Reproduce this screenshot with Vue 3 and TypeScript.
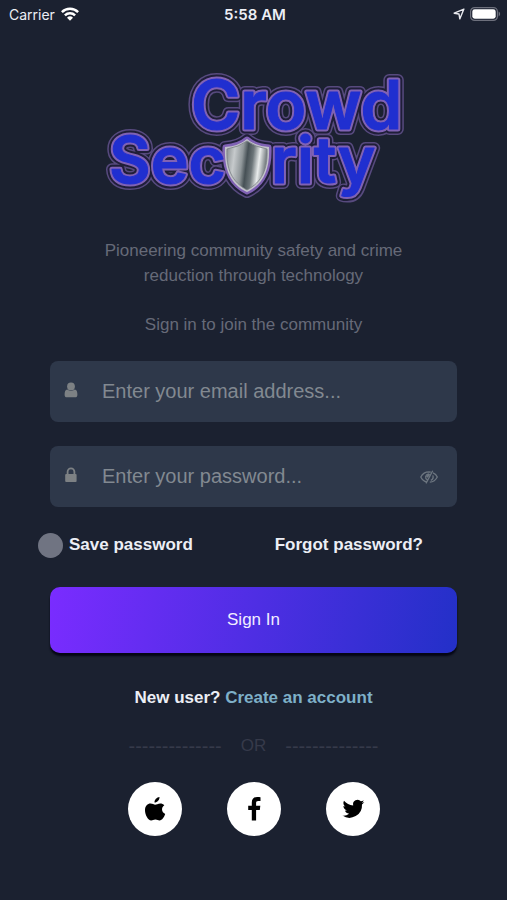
<script setup lang="ts">
import { ref } from 'vue'

const email = ref('')
const password = ref('')
const savePassword = ref(false)
const showPassword = ref(false)

const outlines: string[] = ['halo', 'gap', 'rim']
</script>

<template>
  <div class="screen">
    <header class="status">
      <div class="carrier">
        <span>Carrier</span>
        <svg width="18" height="14" viewBox="0 0 18 14" aria-hidden="true">
          <g fill="none" stroke="#fff" stroke-width="2.5">
            <path d="M.9 5.1a11.6 11.6 0 0 1 16.2 0" />
            <path d="M3.9 8.4a7.3 7.3 0 0 1 10.2 0" />
          </g>
          <path d="M9 13.8 6 10.7a4.3 4.3 0 0 1 6 0z" fill="#fff" />
        </svg>
      </div>
      <strong class="clock">5:58 AM</strong>
      <div class="power">
        <svg width="12" height="12" viewBox="0 0 12 12" aria-hidden="true">
          <path d="M10.9 1.1 1.2 5.2 6 6l.8 4.9z" fill="none" stroke="#e8e9ee" stroke-width="1.4" stroke-linejoin="round" />
        </svg>
        <svg width="31" height="14" viewBox="0 0 31 14" aria-hidden="true">
          <rect x=".6" y=".6" width="26.8" height="12.8" rx="4" fill="none" stroke="#6d707c" stroke-width="1.2" />
          <rect x="2.3" y="2.3" width="23.4" height="9.4" rx="2.4" fill="#fff" />
          <path d="M28.6 4.6c2 .7 2 4.1 0 4.8z" fill="#6d707c" />
        </svg>
      </div>
    </header>

    <main class="content">
      <svg class="logo" viewBox="0 -20 302 156" role="img" aria-label="Crowd Security">
        <defs>
          <linearGradient id="steel" x1="0" y1="0" x2="1" y2=".15">
            <stop offset="0" stop-color="#858b8e" />
            <stop offset=".22" stop-color="#c6cacc" />
            <stop offset=".42" stop-color="#90979a" />
            <stop offset=".54" stop-color="#465055" />
            <stop offset=".68" stop-color="#6c7579" />
            <stop offset=".84" stop-color="#e9ecec" />
            <stop offset="1" stop-color="#7d8487" />
          </linearGradient>
        </defs>
        <g v-for="outline in outlines" :key="outline" :class="outline">
          <use href="#wordmark" />
          <path d="M144 67q-8 7-22 8c-1 22 5 37 22 45 17-8 23-23 22-45q-14-1-22-8z" />
        </g>
        <g class="face">
          <g id="wordmark">
            <text class="upper" x="88" y="57">Crowd</text>
            <text class="lower" x="6" y="111">Sec</text>
            <text class="lower" x="168" y="111">rity</text>
          </g>
        </g>
        <path d="M144 67q-8 7-22 8c-1 22 5 37 22 45 17-8 23-23 22-45q-14-1-22-8z" fill="#c3c4cb" />
        <path d="M144 69q-8 6-20 8c-1 20 5 33 20 41 15-8 21-21 20-41q-12-2-20-8z" fill="url(#steel)" stroke="#777d82" stroke-width=".8" />
      </svg>

      <div class="intro">
        <p>Pioneering community safety and crime<br />reduction through technology</p>
        <p>Sign in to join the community</p>
      </div>

      <form @submit.prevent>
        <div class="field">
          <label for="email" aria-label="Email address">
            <svg width="14" height="16" viewBox="0 0 14 16" aria-hidden="true">
              <circle cx="7" cy="4.4" r="3.9" />
              <path d="M3.2 7.600Q7 10 10.800 7.600C12.700 7.700 13.400 9.900 13.400 12.700c0 1.700-.8 2.600-2.300 2.600H2.900C1.400 15.300.6 14.400.6 12.700c0-2.800.7-5 2.600-5.100z" />
            </svg>
          </label>
          <input id="email" v-model="email" type="email" placeholder="Enter your email address..." />
        </div>

        <div class="field">
          <label for="password" aria-label="Password">
            <svg width="14" height="16" viewBox="0 0 14 16" aria-hidden="true">
              <rect x="1.2" y="7" width="11.4" height="8" rx="1" />
              <path d="M3.6 7.5V4.8a3.4 3.4 0 0 1 6.8 0v2.7" fill="none" stroke="#7d8184" stroke-width="1.8" />
            </svg>
          </label>
          <input id="password" v-model="password" :type="showPassword ? 'text' : 'password'" placeholder="Enter your password..." />
          <button class="reveal" type="button" aria-label="Show password" @click="showPassword = !showPassword">
            <svg width="18" height="14" viewBox="0 0 18 14" aria-hidden="true">
              <g fill="none" stroke="#6d7680" stroke-width="1.3">
                <path d="M6.8 12C4 11.400 2 9.600.8 7 2.500 3.700 5.400 1.900 9 1.900l1.800.2" />
                <path d="M13 2.800C15 3.700 16.500 5.200 17.300 7c-1.500 3-4.200 4.900-7.500 5.200" />
                <path d="M12.700.7 6 13.400M7.200 9.800C4.900 8.500 5 4.500 8.500 3.800M12.800 5.400c.8 2.200-.2 4.100-2 4.900" />
                <path d="M6.800 7.200 9.500 4" stroke-width="2" />
              </g>
            </svg>
          </button>
        </div>

        <div class="options">
          <label class="save"><input v-model="savePassword" type="checkbox" />Save password</label>
          <a class="forgot" href="#forgot">Forgot password?</a>
        </div>

        <button class="submit" type="submit">Sign In</button>
      </form>

      <p class="register">New user? <a href="#register">Create an account</a></p>

      <div class="divider">
        <span class="rule">--------------</span><span>OR</span><span class="rule">--------------</span>
      </div>

      <div class="social">
        <button type="button" aria-label="Sign in with Apple">
          <svg width="24" height="26" viewBox="0 0 24 26" aria-hidden="true">
            <path d="M16.500 1c.2 2.900-2.300 5.600-5 5.500C11.300 3.800 13.800 1.300 16.500 1zM21.300 9.300c-3.300 2.100-2.900 7 .9 8.600-.9 2.700-3.100 6.500-5.600 6.500-1.600 0-2.200-1-4.200-1s-2.700 1-4.200 1C5 24.400 2 18.700 2 14.200 2 9.900 4.700 7.500 7.500 7.500c1.900 0 3.500 1.200 4.700 1.200 1.100 0 2.900-1.300 5.100-1.300 1.500 0 3 .6 4 1.900z" />
          </svg>
        </button>
        <button type="button" aria-label="Sign in with Facebook">
          <svg width="24" height="26" viewBox="0 0 24 26" aria-hidden="true">
            <path d="M18.500 1.200v3.900h-2.300c-1.700 0-2.100.8-2.100 2v2.700h4.200l-.5 4.100h-3.700v10.700H9.800V13.900H6.200V9.800h3.600V6.500C9.800 2.900 12 1 15.300 1c1.500 0 2.800.1 3.200.2z" />
          </svg>
        </button>
        <button type="button" aria-label="Sign in with Twitter">
          <svg width="24" height="24" viewBox="0 0 24 24" aria-hidden="true">
            <path d="M23.300 5c-.8.400-1.700.6-2.500.7.9-.6 1.600-1.400 1.900-2.500-.9.500-1.800.9-2.800 1.100A4.500 4.500 0 0 0 12.200 8.400c-3.700-.2-7-2-9.200-4.700-1.200 2-.6 4.600 1.400 5.900-.7 0-1.400-.2-2-.5 0 2.100 1.500 4 3.500 4.400-.6.200-1.300.2-2 .1.600 1.800 2.200 3 4.200 3.100A9 9 0 0 1 1.400 18.600 12.600 12.600 0 0 0 21 7.400c.9-.6 1.700-1.400 2.300-2.400z" />
          </svg>
        </button>
      </div>
    </main>
  </div>
</template>

<style>
body {
  margin: 0;
  background: #1b2130;
}
</style>

<style scoped>
.screen {
  min-height: 100vh;
  box-sizing: border-box;
  background: #1b2130;
  color: #eceef5;
  font-family: "Liberation Sans", Arial, sans-serif;
}

.status {
  display: grid;
  grid-template-columns: 1fr auto 1fr;
  align-items: center;
  height: 28px;
  padding: 0 6px 0 9px;
  font: 14px Inter, sans-serif;
}

.carrier,
.power {
  display: flex;
  align-items: center;
  gap: 6px;
}

.power {
  justify-content: flex-end;
  gap: 5px;
}

.clock {
  font-size: 15px;
  font-weight: 600;
}

.content {
  padding: 24px 50px 0;
}

.logo {
  display: block;
  width: 302px;
  height: 156px;
  margin: 0 auto;
}

.upper {
  font: 600 67px Inter, sans-serif;
}

.lower {
  font: 600 64px Inter, sans-serif;
}

.logo g {
  stroke-linejoin: round;
}

.halo {
  fill: #574a7e;
  stroke: #574a7e;
  stroke-width: 12px;
}

.gap {
  fill: #1f1e38;
  stroke: #1f1e38;
  stroke-width: 9px;
}

.rim {
  fill: #8062b4;
  stroke: #8062b4;
  stroke-width: 5px;
}

.face {
  fill: #202fd0;
  stroke: #202fd0;
  stroke-width: 1px;
}

.intro {
  margin-top: 30px;
  color: #666a78;
  font-size: 17px;
  line-height: 25px;
  text-align: center;
}

.intro p {
  margin: 0 0 24px;
}

.field {
  display: flex;
  align-items: center;
  height: 61px;
  margin-bottom: 24px;
  border-radius: 8px;
  background: #2e384a;
}

.field label {
  display: flex;
  padding: 0 24px 4px 14px;
  fill: #7d8184;
}

.field input {
  flex: 1;
  min-width: 0;
  height: 100%;
  padding: 0;
  border: 0;
  outline: 0;
  background: none;
  color: #eceef5;
  font: 20px "Liberation Sans", Arial, sans-serif;
}

.field input::placeholder {
  color: #828991;
  opacity: 1;
}

.reveal {
  display: flex;
  margin-right: 19px;
  padding: 0;
  border: 0;
  background: none;
}

.options {
  display: flex;
  align-items: center;
  justify-content: space-between;
  margin: 0 34px 0 -12px;
  font-size: 17px;
  font-weight: 700;
  line-height: 28px;
}

.save {
  display: flex;
  align-items: center;
  gap: 6px;
}

.save input {
  appearance: none;
  width: 25px;
  height: 25px;
  margin: 0;
  border-radius: 50%;
  background: #707482;
}

.save input:checked {
  background: #7a2eff;
}

.forgot {
  color: inherit;
  text-decoration: none;
}

.submit {
  display: block;
  width: 100%;
  height: 66px;
  margin-top: 28px;
  border: 0;
  border-radius: 10px;
  background: linear-gradient(100deg, #7a2cff, #2330c8);
  box-shadow: 0 3px 2px #050614;
  color: #f1edff;
  font: 17px "Liberation Sans", Arial, sans-serif;
}

.register {
  margin: 33px 0 0;
  font-size: 17px;
  font-weight: 700;
  line-height: 24px;
  text-align: center;
}

.register a {
  color: #7eb0c8;
  text-decoration: none;
}

.divider {
  display: flex;
  justify-content: center;
  gap: 19px;
  margin-top: 24px;
  color: #363a4a;
  font-size: 17px;
  line-height: 24px;
}

.rule {
  font-size: 20px;
}

.social {
  display: flex;
  justify-content: center;
  gap: 45px;
  margin-top: 24px;
}

.social button {
  display: grid;
  place-items: center;
  width: 54px;
  height: 54px;
  padding: 0;
  border: 0;
  border-radius: 50%;
  background: #fff;
}
</style>
